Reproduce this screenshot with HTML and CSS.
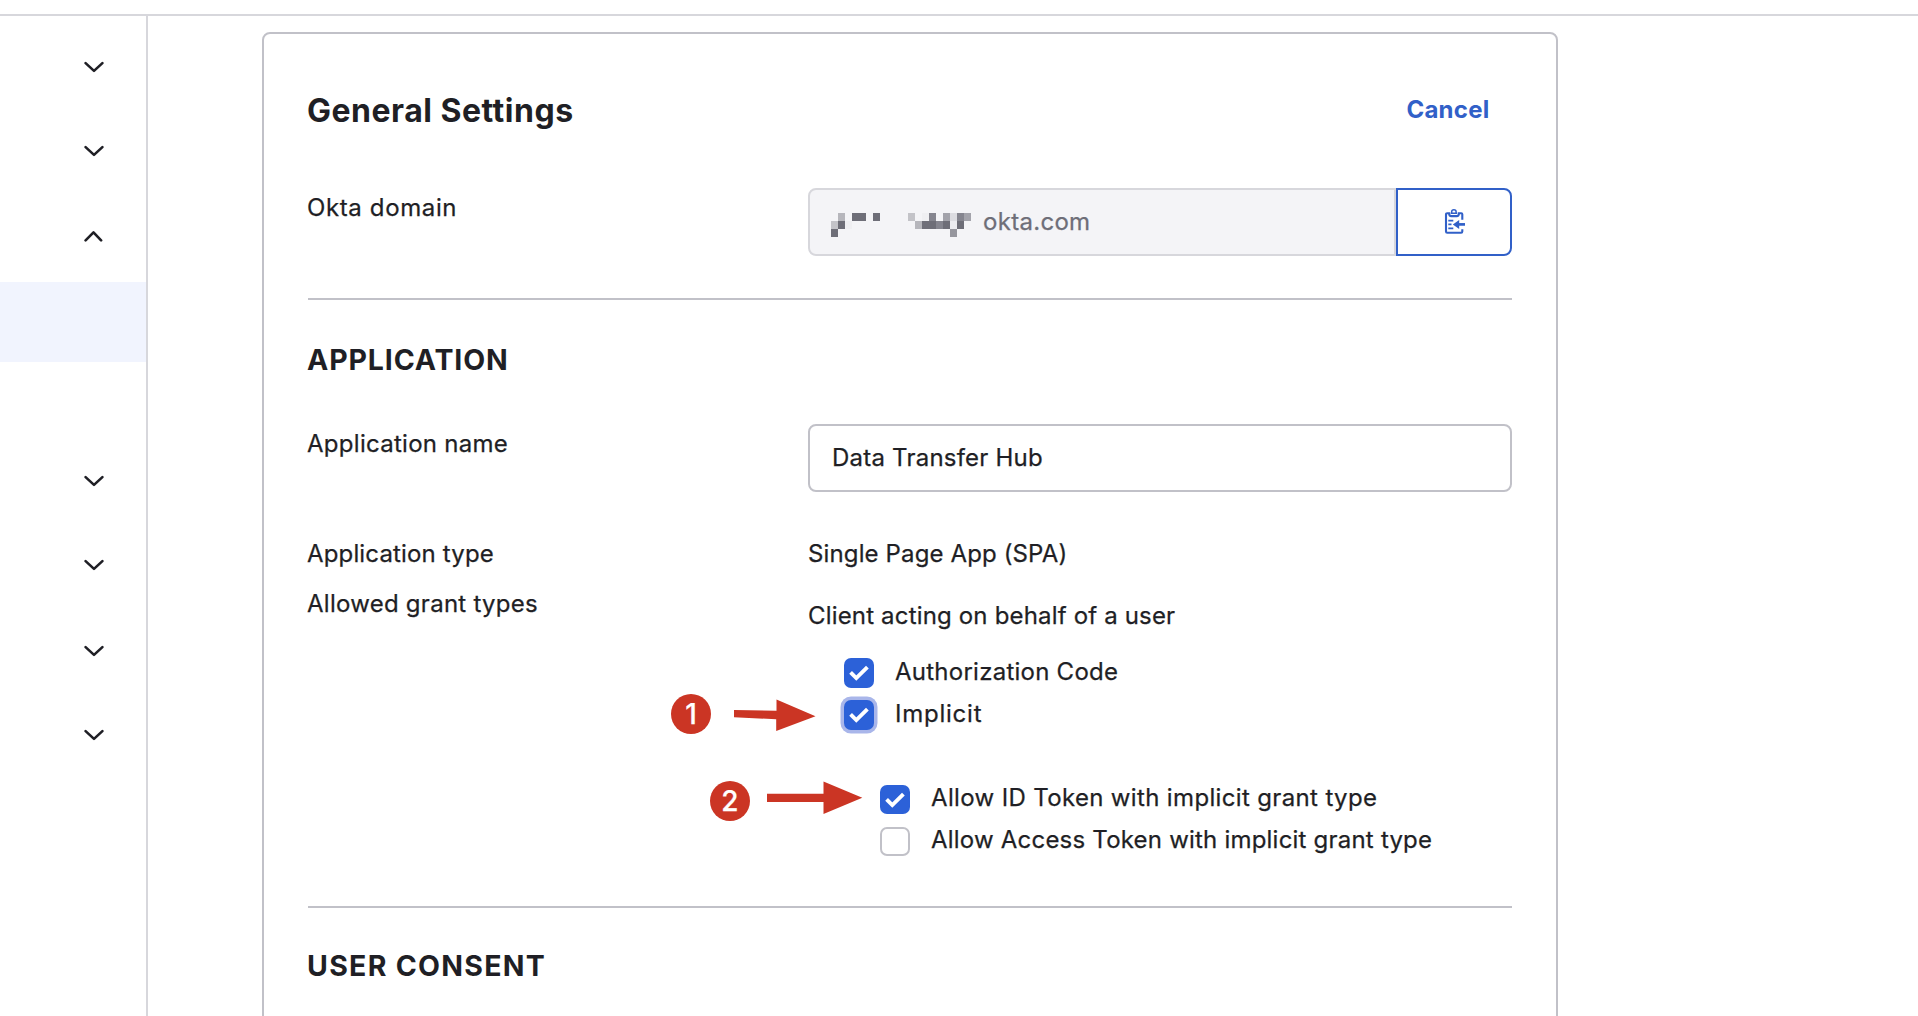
FILE: index.html
```html
<!DOCTYPE html>
<html lang="en">
<head>
<meta charset="utf-8">
<title>General Settings</title>
<link rel="stylesheet" href="styles.css">
</head>
<body>
<svg class="defs" aria-hidden="true">
  <symbol id="chevron-down" viewBox="0 0 20 12"><path d="M1.6 2.1 10 9.9l8.4-7.8" /></symbol>
  <symbol id="chevron-up" viewBox="0 0 20 12"><path d="M1.6 10.4 9.5 2.4l7.6 8" /></symbol>
  <symbol id="check" viewBox="0 0 30 30"><path d="M6.6 14.4 12.3 20.1 23.4 9.2" /></symbol>
</svg>
<header class="topbar"></header>
<div class="layout">
  <nav class="sidebar">
    <div class="nav-item"><svg class="chevron"><use href="#chevron-down"/></svg></div>
    <div class="nav-item"><svg class="chevron"><use href="#chevron-down"/></svg></div>
    <div class="nav-item nav-item-open"><svg class="chevron"><use href="#chevron-up"/></svg></div>
    <div class="nav-current"></div>
    <div class="nav-item"><svg class="chevron"><use href="#chevron-down"/></svg></div>
    <div class="nav-item"><svg class="chevron"><use href="#chevron-down"/></svg></div>
    <div class="nav-item nav-item-spaced"><svg class="chevron"><use href="#chevron-down"/></svg></div>
    <div class="nav-item"><svg class="chevron"><use href="#chevron-down"/></svg></div>
  </nav>
  <main class="card">
    <div class="card-header">
      <h1 class="title">General Settings</h1>
      <a class="cancel">Cancel</a>
    </div>

    <div class="row row-domain">
      <div class="label label-domain">Okta domain</div>
      <div class="domain">
        <div class="domain-value">
          <svg class="mosaic" viewBox="0 0 152 24" shape-rendering="crispEdges">
            <path fill="#6e6e78" d="M21 0h14v8H21zM42 0h7v8h-7zM7 8h7v8H7zM0 16h7v8H0zM91 8h14v8H91zM112 8h7v8h-7zM126 8h7v8h-7z"/>
            <path fill="#b6b6bc" d="M7 0h7v8H7zM84 8h7v8h-7z"/>
            <path fill="#c3c3c8" d="M0 8h7v8H0zM77 0h7v8h-7z"/>
            <path fill="#efeff2" d="M14 8h7v8h-7zM91 0h7v8h-7z"/>
            <path fill="#85858f" d="M98 0h7v8h-7zM105 8h7v8h-7zM126 0h7v8h-7z"/>
            <path fill="#a3a3ab" d="M112 0h7v8h-7zM133 0h7v8h-7z"/>
            <path fill="#dcdce1" d="M119 0h7v8h-7z"/>
            <path fill="#ebebef" d="M119 8h7v8h-7z"/>
            <path fill="#96969e" d="M119 16h7v8h-7z"/>
          </svg>
          <span class="domain-text">okta.com</span>
        </div>
        <button class="copy" aria-label="Copy to clipboard">
          <svg class="clipboard" viewBox="0 0 22 28">
            <g fill="none" stroke="currentColor" stroke-width="2.1">
              <path d="M18.3 11.7V6.3q0-1.1-1.1-1.1h-2.3c0 2.2-.8 2.9-2.2 2.9H7.3c-1.4 0-2.2-.7-2.2-2.9H3.2Q2 5.2 2 6.4v17.1q0 1.2 1.2 1.2h13.9q1.2 0 1.2-1.2v-2.2"/>
              <path stroke-width="1.5" d="M6.6 5.3h6.6M7.7 5V3.6q0-1.9 2.2-1.9t2.2 1.9V5"/>
              <path stroke-width="1.9" d="M4.3 12.6h5M4.3 16.4h3.2M4.3 20.4h5"/>
              <path stroke-width="2.7" d="M14 16.4h7"/>
            </g>
            <path fill="currentColor" d="M8.8 16.4 15.2 11.9v9z"/>
          </svg>
        </button>
      </div>
    </div>

    <hr class="divider divider-first">
    <h2 class="section section-application">APPLICATION</h2>

    <div class="row row-name">
      <div class="label label-name">Application name</div>
      <div class="field">Data Transfer Hub</div>
    </div>
    <div class="row row-type">
      <div class="label-type">Application type</div>
      <div class="value-type">Single Page App (SPA)</div>
    </div>
    <div class="row row-grants">
      <div class="label-grants">Allowed grant types</div>
      <div class="grants">
        <div class="grants-intro">Client acting on behalf of a user</div>
        <div class="option">
          <span class="checkbox checked"><svg><use href="#check"/></svg></span>
          <span class="option-code">Authorization Code</span>
        </div>
        <div class="option">
          <span class="checkbox checked focused"><svg><use href="#check"/></svg></span>
          <span class="option-implicit">Implicit</span>
        </div>
        <div class="suboptions">
          <div class="option">
            <span class="checkbox checked short"><svg><use href="#check"/></svg></span>
            <span class="option-id">Allow ID Token with implicit grant type</span>
          </div>
          <div class="option">
            <span class="checkbox short"></span>
            <span class="option-access">Allow Access Token with implicit grant type</span>
          </div>
        </div>
      </div>
    </div>

    <hr class="divider divider-second">
    <h2 class="section section-consent">USER CONSENT</h2>
  </main>
</div>

<div class="badge badge-one">1</div>
<div class="badge badge-two">2</div>
<svg class="arrow arrow-one" viewBox="0 0 82 34"><path d="M0 11l42.5.7V.5L81.5 17.3 42.2 32V20.3L0 18.2z"/></svg>
<svg class="arrow arrow-two" viewBox="0 0 96 34"><path d="M0 12.7h56.5V.5L95.3 16.8 56.5 33V21H0z"/></svg>
</body>
</html>
```
FILE: styles.css
```css
* { box-sizing: border-box; }

body {
  margin: 0;
  height: 1016px;
  overflow: hidden;
  background: #fff;
  color: #1f1f25;
  font: 400 24px/30px Inter, "Liberation Sans", sans-serif;
  -webkit-text-stroke: 0.25px currentColor;
}

.defs { display: none; }

.topbar {
  height: 16px;
  border-bottom: 2px solid #d7d7dc;
}

.layout {
  display: flex;
  align-items: flex-start;
}

/* Sidebar */
.sidebar {
  flex: none;
  width: 148px;
  height: 1000px;
  padding-top: 9px;
  border-right: 2px solid #d7d7dc;
}

.nav-item {
  display: flex;
  align-items: center;
  justify-content: flex-end;
  height: 84px;
  padding-right: 42px;
}

.nav-item-open { height: 86px; }
.nav-item-spaced { margin-top: 2px; }

.nav-current {
  height: 80px;
  margin: 3px 0 77px;
  background: #f1f4fe;
}

.chevron {
  width: 20px;
  height: 12px;
  fill: none;
  stroke: #1f1f25;
  stroke-width: 2.6;
  stroke-linejoin: round;
  stroke-linecap: round;
}

/* Settings card */
.card {
  width: 1296px;
  height: 1010px;
  margin: 16px 0 0 114px;
  padding: 57px 44px 0 43px;
  border: 2px solid #c1c1c8;
  border-radius: 8px;
}

.card-header {
  display: flex;
  align-items: flex-start;
  justify-content: space-between;
  height: 40px;
}

.title {
  margin: 0;
  font-size: 32px;
  font-weight: 700;
  line-height: 40px;
  letter-spacing: 0.5px;
  -webkit-text-stroke: 0;
}

.cancel {
  padding: 4px 22.5px 0 0;
  color: #3160c8;
  font-weight: 700;
  letter-spacing: 0.26px;
  -webkit-text-stroke: 0;
}

.row {
  display: grid;
  grid-template-columns: 501px 704px;
}

.row-domain { margin-top: 57px; }
.row-name { margin-top: 46px; }
.row-type { margin-top: 47px; }
.row-grants { margin-top: 20px; }

.label { padding-top: 5px; }
.label-domain { letter-spacing: 0.62px; }
.label-name { letter-spacing: 0.28px; }
.label-type { letter-spacing: 0.15px; }
.label-grants { letter-spacing: 0.26px; }
.value-type { letter-spacing: 0.13px; }

.domain {
  display: flex;
  height: 68px;
}

.domain-value {
  display: flex;
  align-items: center;
  width: 588px;
  padding-left: 21px;
  border: 2px solid #d7d7dc;
  border-radius: 8px 0 0 8px;
  background: #f4f4f7;
  color: #6e6e78;
}

.mosaic {
  width: 152px;
  height: 24px;
  margin-top: 6px;
}

.domain-text { letter-spacing: 0.3px; }

.copy {
  display: flex;
  align-items: center;
  justify-content: center;
  width: 116px;
  padding: 0 0 0 1px;
  border: 2px solid #3160c8;
  border-radius: 0 8px 8px 0;
  background: #fff;
  color: #3160c8;
}

.clipboard {
  width: 22px;
  height: 28px;
}

.divider {
  height: 2px;
  margin: 0 0 0 1px;
  border: 0;
  background: #c1c1c8;
}

.divider-first { margin-top: 42px; }
.divider-second { margin-top: 39px; }

.section {
  margin: 0;
  font-size: 28.5px;
  font-weight: 700;
  line-height: 36px;
  -webkit-text-stroke: 0;
}

.section-application {
  margin-top: 42px;
  letter-spacing: 0.87px;
}

.section-consent {
  margin-top: 40px;
  letter-spacing: 1.28px;
}

.field {
  height: 68px;
  padding: 17px 22px;
  border: 2px solid #c1c1c8;
  border-radius: 8px;
  letter-spacing: 0.22px;
}

/* Grant types */
.grants { padding-top: 12px; }

.grants-intro {
  margin-bottom: 26px;
  letter-spacing: 0.17px;
}

.option {
  display: flex;
  gap: 21px;
  height: 42px;
  padding-left: 36px;
}

.suboptions { margin: 42px 0 0 36px; }

.checkbox {
  flex: none;
  width: 30px;
  height: 30px;
  margin-top: 0.5px;
  border: 2px solid #c1c1c8;
  border-radius: 7px;
}

.checkbox.short {
  height: 29px;
  margin-top: 2px;
}

.checkbox.checked {
  border: 0;
  background: #2c61d8;
}

.checkbox.focused { box-shadow: 0 0 0 3.5px #a9b6ea; }

.checkbox svg {
  display: block;
  width: 30px;
  height: 30px;
  fill: none;
  stroke: #fff;
  stroke-width: 3.9;
}

.option-code { letter-spacing: 0.25px; }
.option-implicit { letter-spacing: 0.76px; }
.option-id { letter-spacing: 0.35px; }
.option-access { letter-spacing: 0.21px; }

/* Callouts laid over the form */
.badge {
  position: absolute;
  width: 40px;
  height: 40px;
  border-radius: 50%;
  background: #cb3524;
  color: #fff;
  font-size: 28px;
  font-weight: 500;
  line-height: 41px;
  text-align: center;
}

.badge-one { left: 671px; top: 694px; }
.badge-two { left: 710px; top: 781px; }

.arrow {
  position: absolute;
  height: 34px;
  fill: #cb3524;
}

.arrow-one { left: 734px; top: 699px; width: 82px; }
.arrow-two { left: 767px; top: 781px; width: 96px; }
```
